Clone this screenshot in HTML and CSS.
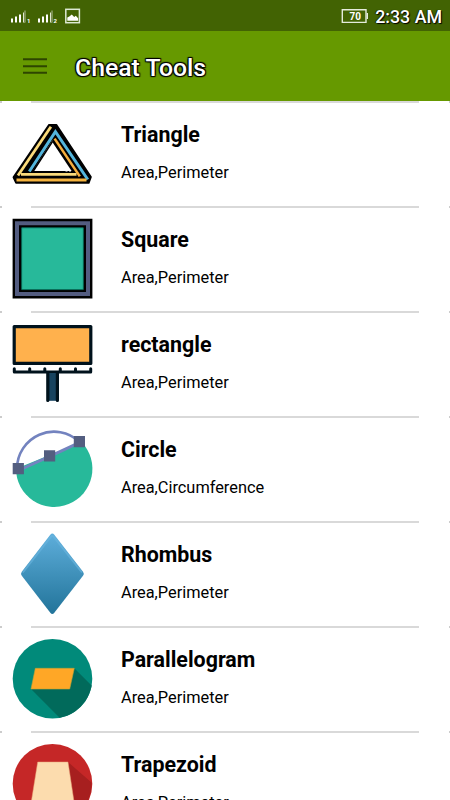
FILE: index.html
```
<!DOCTYPE html>
<html lang="en">

<head>
  <meta charset="UTF-8">
  <meta name="viewport" content="width=device-width, initial-scale=1.0">
  <title>Cheat Tools</title>
  <link rel="stylesheet" href="styles.css">
</head>

<body>
  <!-- Status bar -->
  <div class="status">
    <svg class="signals" width="72" height="20" viewBox="0 0 72 20">
      <g fill="#fff">
        <path d="M1 12.5h2v4H1zM5 10.5h2v6H5zM9 8.5h2v8H9zM28 12.5h2v4h-2zM32 10.5h2v6h-2zM36 8.5h2v8h-2z" />
      </g>
      <path d="M13 6.5h2v10h-2zM40 6.5h2v10h-2z" fill="#e0e8d0" />
      <path d="M14 4.5h2v12h-2zM41 4.5h2v12h-2z" fill="#7b9051" />
      <text x="17" y="16.5" class="sim">1</text>
      <text x="43.5" y="16.5" class="sim">2</text>
      <rect x="55.8" y="3.3" width="13.6" height="13.4" fill="none" stroke="#dce9d3" stroke-width="1.5" />
      <path d="M57.3 14.8v-3.2l2-1.2 2.5-2 2.4 2.6 1.6-1.3 2.3 2.6v2.5z" fill="#fff" />
    </svg>
    <div class="status-right">
      <svg width="28" height="16" viewBox="0 0 28 16">
        <path d="M2.3 1.7H26v12.7H2.3z" fill="none" stroke="#e4ebdc" stroke-width="1.4" />
        <path d="M26.6 5h1.4v6h-1.4z" fill="#e4ebdc" />
        <text x="15.2" y="11.7" class="level">70</text>
      </svg>
      <span class="clock">2:33 AM</span>
    </div>
  </div>

  <!-- App bar -->
  <div class="toolbar">
    <svg class="menu" width="24" height="16" viewBox="0 0 24 16">
      <path d="M0 1.2h24M0 8.2h24M0 14.7h24" stroke="#2e4500" stroke-width="2" />
    </svg>
    <h1>Cheat Tools</h1>
  </div>

  <!-- List of shapes -->
  <ul class="shapes">
    <li class="shape">
      <svg class="icon" viewBox="0 0 80 80">
        <path d="M37 10.7h7.4L79 63l-2.2 6H4l-2.6-5.7z" fill="#000" stroke="#000" stroke-width="1.6" stroke-linejoin="round" />
        <path d="M40.3 26.5L61 57.5H20.5z" fill="#fff" />
        <g fill="none">
          <path d="M38.9 12.8L6 61.5" stroke="#fadb7b" stroke-width="2.8" />
          <path d="M17.3 57.5L43.4 17.6 75.8 65.5" stroke="#53b5dc" stroke-width="3" />
          <path d="M42.6 24.6L67.8 62.4" stroke="#f5ae3d" stroke-width="2.6" />
          <path d="M9 60.4h55.5" stroke="#fadb7b" stroke-width="2.8" />
          <path d="M4.5 66h70" stroke="#f5b33e" stroke-width="2.8" />
          <path d="M21 57.5L40.6 27.4" stroke="#000" stroke-width="1.6" />
          <path d="M40.6 27l20.6 31" stroke="#000" stroke-width="1.4" />
          <path d="M20 57.8h33.5M55.5 57.8h1.5M59 57.8h3" stroke="#000" stroke-width="1.8" />
        </g>
      </svg>
      <div class="text">
        <h2>Triangle</h2>
        <p>Area,Perimeter</p>
      </div>
    </li>
    <li class="shape">
      <svg class="icon" viewBox="0 0 80 80">
        <path d="M.6-.2h79.8v79.6H.6z" fill="#000" />
        <path d="M3 2.3h75v74.6H3z" fill="#535c80" />
        <path d="M7 6.3h67v66.8H7z" fill="#000" />
        <path d="M9.7 8.8h61.6v61.8H9.7z" fill="#27b99a" stroke="#087561" stroke-width=".8" />
      </svg>
      <div class="text">
        <h2>Square</h2>
        <p>Area,Perimeter</p>
      </div>
    </li>
    <li class="shape">
      <svg class="icon" viewBox="0 0 80 80">
        <rect x="2.2" y="2.6" width="76.6" height="36.8" fill="#ffb14d" stroke="#00121c" stroke-width="3.2" stroke-linejoin="round" />
        <path d="M2.3 44.8v3.1h76.4v-3.1M17.7 44.8v3M32.8 44.8v3M48.3 44.8v3M63.5 44.8v3" fill="none" stroke="#00121c" stroke-width="3" stroke-linecap="round" stroke-linejoin="round" />
        <path d="M35 49h11v27.8H35z" fill="#17435f" />
        <path d="M35.8 49v27.5M45.4 49v27.5" stroke="#00121c" stroke-width="3.2" stroke-linecap="round" />
      </svg>
      <div class="text">
        <h2>rectangle</h2>
        <p>Area,Perimeter</p>
      </div>
    </li>
    <li class="shape">
      <svg class="icon" viewBox="0 0 80 80">
        <path d="M4 39.7A38.2 38.2 0 1 0 69.5 13z" fill="#27b99a" />
        <path d="M5 39.7A37 37 0 0 1 67.3 12.7" fill="none" stroke="#7383bf" stroke-width="2.6" />
        <path d="M6.3 41.5L37.7 27.4 67.3 13.7" fill="none" stroke="#7383bf" stroke-width="3" />
        <path d="M.7 34h11.2v11.2H.7zM32 21.3h11.2v11.2H32zM61.8 7H73v11.2H61.8z" fill="#535e80" />
      </svg>
      <div class="text">
        <h2>Circle</h2>
        <p>Area,Circumference</p>
      </div>
    </li>
    <li class="shape">
      <svg class="icon" viewBox="0 0 80 80">
        <defs>
          <linearGradient id="blue" x1="0" y1="0" x2="0" y2="1">
            <stop offset="0" stop-color="#5eaedb" />
            <stop offset="1" stop-color="#22749a" />
          </linearGradient>
        </defs>
        <path d="M38.3.7q2-2.4 4 0L71 37.7q1.5 2 0 4L42.3 78.7q-2 2.4-4 0L9.8 41.7q-1.5-2 0-4z" fill="url(#blue)" />
        <path d="M10.8 38.5L38.7 2.8q1.6-1.8 3.2 0L70 38.5" fill="none" stroke="#6bb6df" stroke-width="2" opacity=".6" />
      </svg>
      <div class="text">
        <h2>Rhombus</h2>
        <p>Area,Perimeter</p>
      </div>
    </li>
    <li class="shape">
      <svg class="icon" viewBox="0 0 80 80">
        <circle cx="40.5" cy="39.7" r="39.8" fill="#018a7a" />
        <path d="M62.3 29.3L79.6 46.4A39.8 39.8 0 0 1 47.6 78.8L19 50z" fill="#016a5b" />
        <path d="M23.3 29.3h39L57.7 50H19z" fill="#ffa726" stroke="#c3a332" stroke-width=".6" />
      </svg>
      <div class="text">
        <h2>Parallelogram</h2>
        <p>Area,Perimeter</p>
      </div>
    </li>
    <li class="shape">
      <svg class="icon" viewBox="0 0 80 80">
        <circle cx="40.5" cy="39.7" r="39.8" fill="#c52727" />
        <path d="M56 18l23.5 20.5A39.8 39.8 0 0 1 50 78.4L18 62z" fill="#a71f1f" />
        <path d="M25.7 18H56l7 46H18.3z" fill="#fcdcae" stroke="#e8a579" stroke-width=".5" />
      </svg>
      <div class="text">
        <h2>Trapezoid</h2>
        <p>Area,Perimeter</p>
      </div>
    </li>
  </ul>
</body>

</html>
```
FILE: styles.css
```
body {
  margin: 0;
  height: 800px;
  overflow: hidden;
  background-color: #fff;
  color: #000;
  font-family: Roboto, sans-serif;
}

/* Status bar */
.status {
  display: flex;
  justify-content: space-between;
  align-items: center;
  box-sizing: border-box;
  height: 31px;
  padding: 0 8px 0 10px;
  background-color: #426303;
  color: #fff;
}

.signals {
  margin-top: 1px;
}

.sim {
  fill: #fff;
  font-size: 6px;
  font-weight: bold;
}

.status-right {
  display: flex;
  align-items: center;
  gap: 7px;
}

.level {
  fill: #fff;
  font-size: 10px;
  font-weight: bold;
  text-anchor: middle;
}

.clock {
  font-size: 17.8px;
  font-weight: 500;
  line-height: 20px;
  margin-top: 3px;
  text-shadow: 1px 1px 1px #000, -1px 0 1px #1c2b00;
}

/* App bar */
.toolbar {
  display: flex;
  align-items: center;
  height: 70px;
  padding-left: 23px;
  background-color: #669900;
}

.toolbar h1 {
  margin: 3px 0 0 28px;
  color: #fff;
  font-size: 24.8px;
  font-weight: 500;
  line-height: 30px;
  text-shadow: 1px 1px 1px #000, -1px -1px 1px #000, 1px -1px 1px #000, -1px 1px 1px #000;
}

/* List */
.shapes {
  margin: 0;
  padding: 0;
  list-style: none;
}

/* The divider is inset, with a tiny mark left at both edges */
.shape {
  display: flex;
  box-sizing: border-box;
  height: 105px;
  padding: 13px 12px 0;
  background: linear-gradient(90deg, #ccc 2px, transparent 2px, transparent 31px, #d9d9d9 31px, #d9d9d9 419px, transparent 419px, transparent 449px, #ccc 449px) no-repeat 0 0 / 100% 2px;
}

.icon {
  flex: none;
  width: 80px;
  height: 80px;
  overflow: visible;
}

.text {
  margin-left: 29px;
}

.text h2 {
  margin: 7px 0 0;
  font-size: 21.4px;
  font-weight: bold;
  line-height: 27px;
}

.text p {
  margin: 15px 0 0;
  font-size: 16.35px;
  line-height: 20px;
}
```
